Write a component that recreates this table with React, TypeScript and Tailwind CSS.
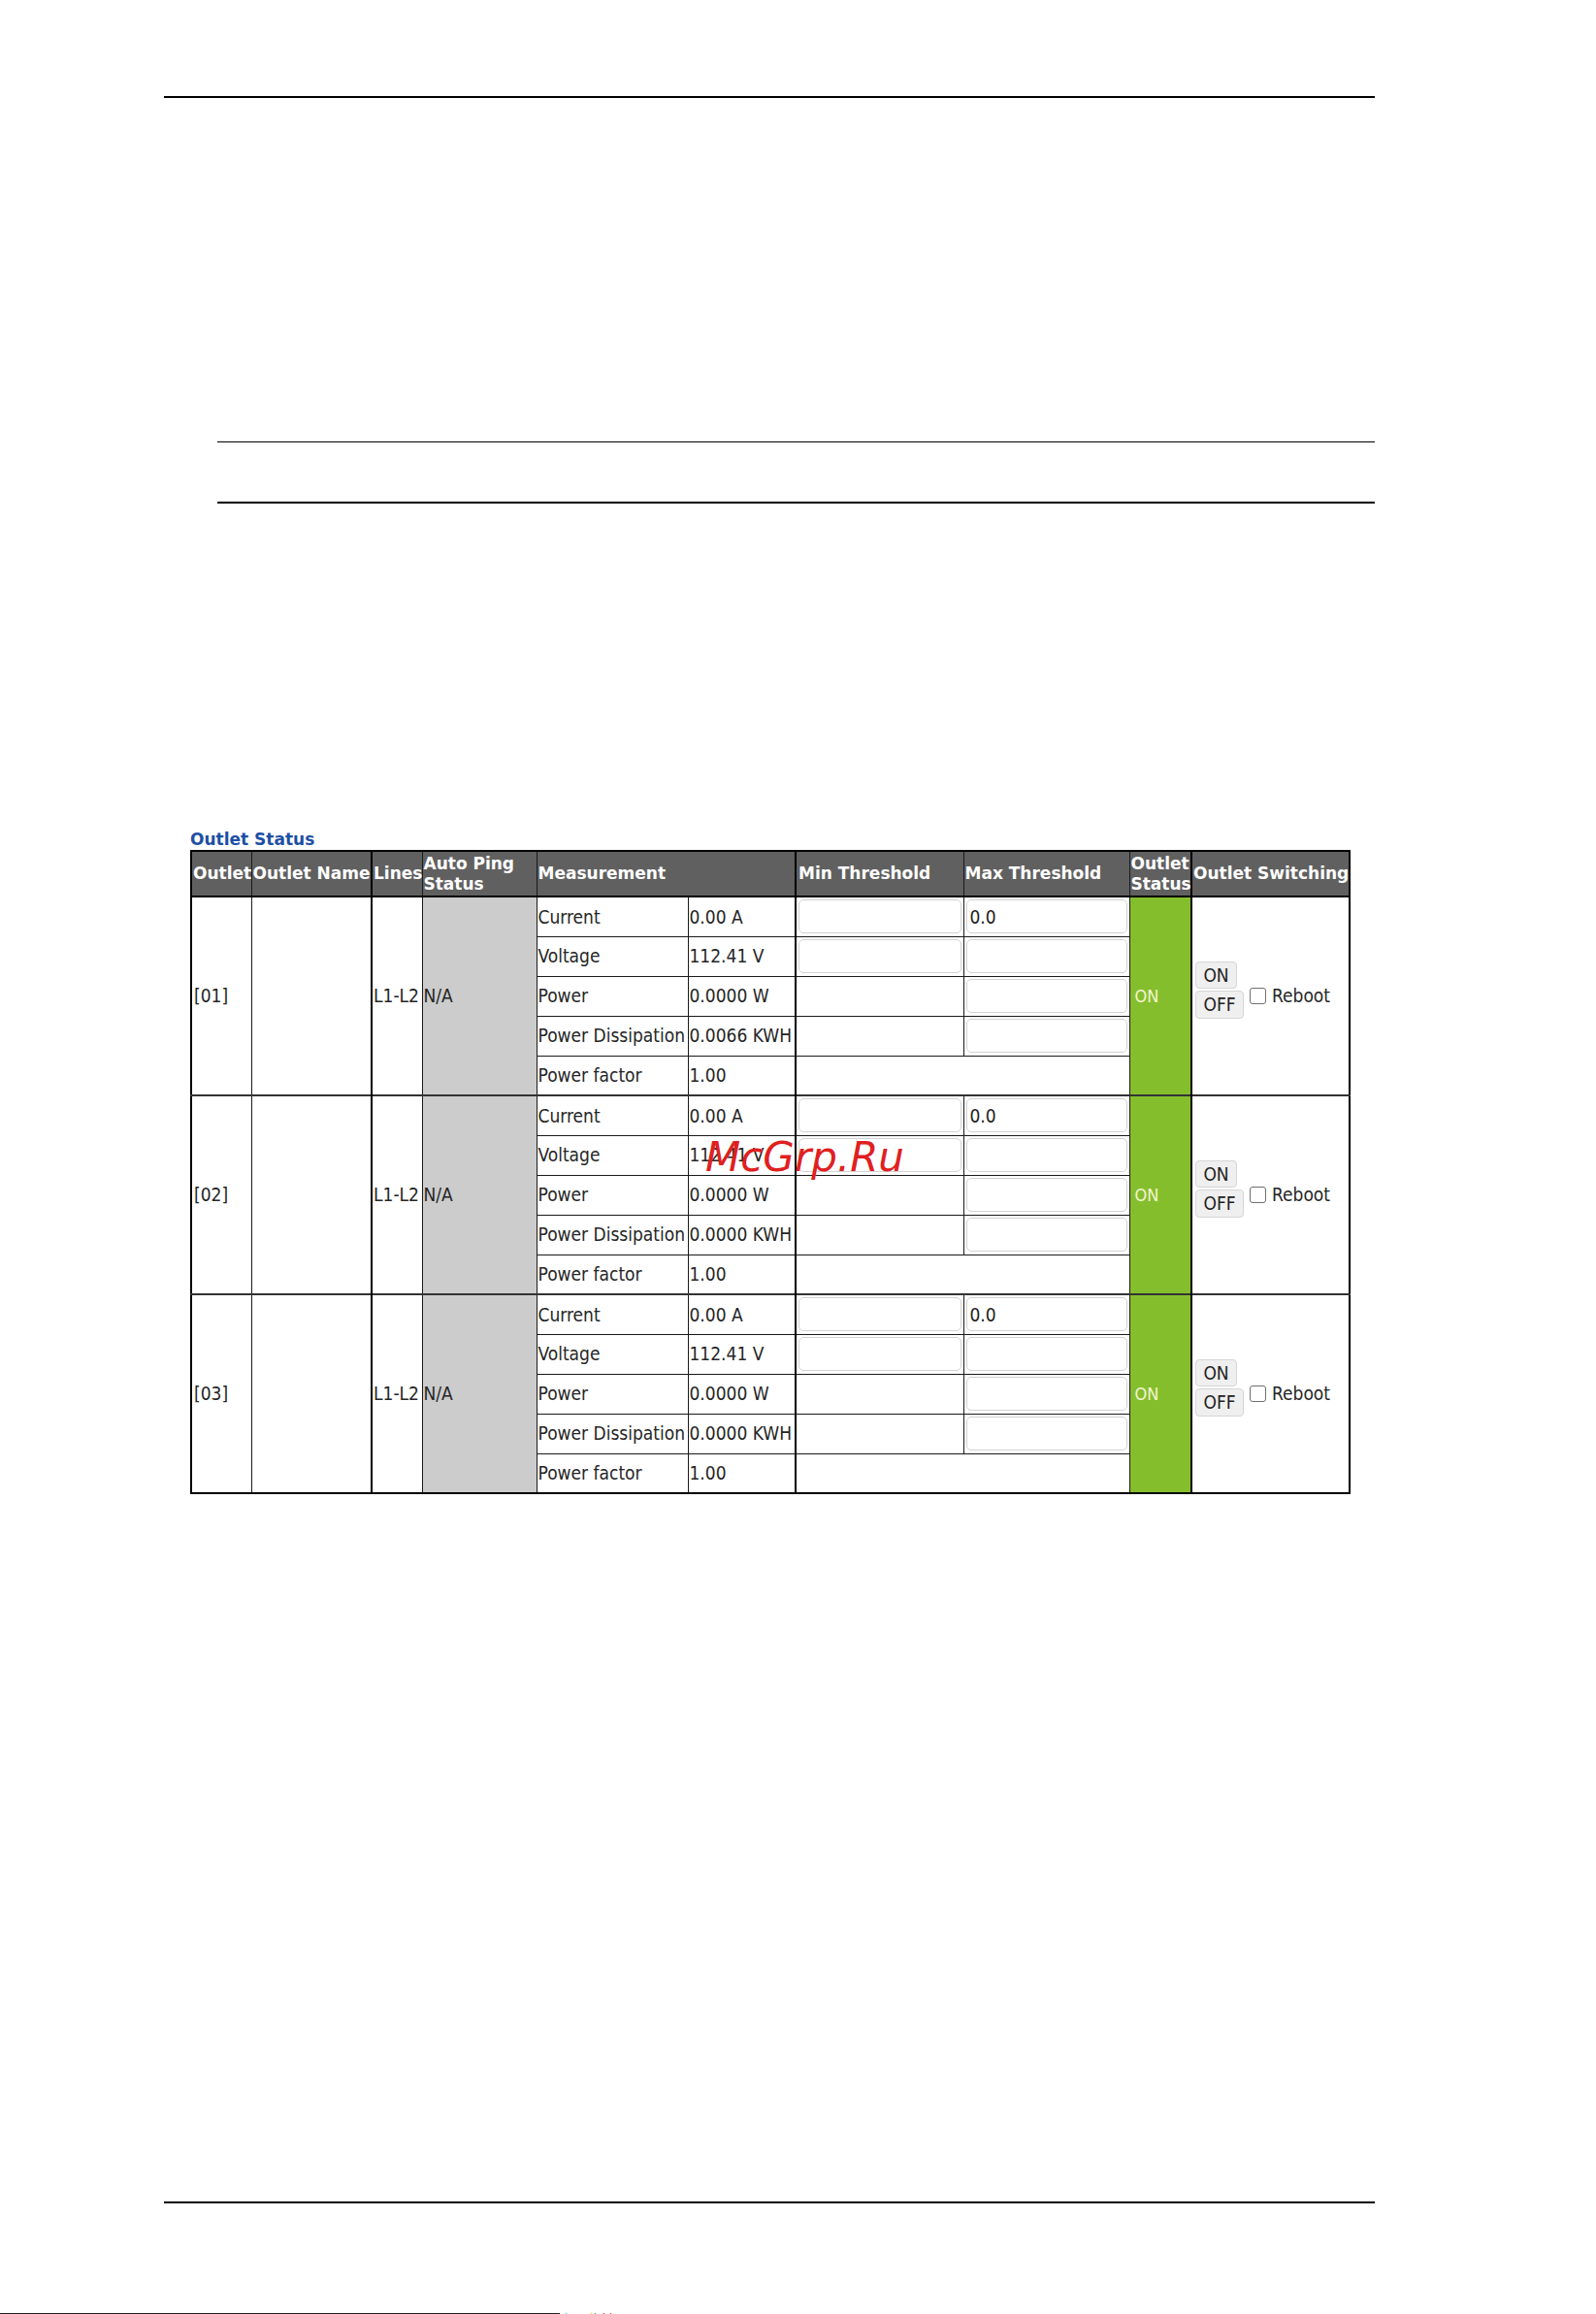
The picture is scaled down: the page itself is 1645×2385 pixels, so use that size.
import React from "react";

const labels = ["Current", "Voltage", "Power", "Power Dissipation", "Power factor"];

const groups = [
  { id: "[01]", vals: ["0.00 A", "112.41 V", "0.0000 W", "0.0066 KWH", "1.00"] },
  { id: "[02]", vals: ["0.00 A", "112.41 V", "0.0000 W", "0.0000 KWH", "1.00"] },
  { id: "[03]", vals: ["0.00 A", "112.41 V", "0.0000 W", "0.0000 KWH", "1.00"] },
];

function Field({ value }: { value?: string }) {
  return (
    <input
      readOnly
      defaultValue={value ?? ""}
      className="block w-full h-[35px] rounded-[5px] border border-[#d2d2d2] bg-white px-[3px] text-[19px] text-[#222] outline-none"
    />
  );
}

const th =
  "bg-[#606060] text-white font-['DejaVu_Sans',sans-serif] font-bold text-[17px] leading-[21px] text-left align-middle pl-[1px] border border-[#1a1a1a] border-b-2 border-b-black";
const td = "border border-[#1a1a1a] align-middle";

function Group({ g }: { g: (typeof groups)[number] }) {
  return (
    <>
      {labels.map((label, r) => {
        const first = r === 0;
        const topB = first ? " border-t-2 border-t-[#333]" : "";
        return (
          <tr key={label} className="h-[41px]">
            {first && (
              <>
                <td rowSpan={5} className={td + topB + " pl-[2px]"}>
                  {g.id}
                </td>
                <td rowSpan={5} className={td + topB + " border-r-2 border-r-black"}></td>
                <td rowSpan={5} className={td + topB + " pl-[1px]"}>
                  L1-L2
                </td>
                <td rowSpan={5} className={td + topB + " bg-[#cccccc] pl-[1px]"}>
                  N/A
                </td>
              </>
            )}
            <td className={td + topB + " pl-[1px] whitespace-nowrap"}>{label}</td>
            <td className={td + topB + " pl-[1px] whitespace-nowrap border-r-2 border-r-black"}>
              {g.vals[r]}
            </td>
            {r <= 1 && (
              <>
                <td className={td + topB + " p-[2px]"}>
                  <Field />
                </td>
                <td className={td + topB + " p-[2px]"}>
                  <Field value={first ? "0.0" : ""} />
                </td>
              </>
            )}
            {(r === 2 || r === 3) && (
              <>
                <td className={td + topB}></td>
                <td className={td + topB + " p-[2px]"}>
                  <Field />
                </td>
              </>
            )}
            {r === 4 && <td colSpan={2} className={td + topB}></td>}
            {first && (
              <>
                <td
                  rowSpan={5}
                  className={td + topB + " bg-[#85be2d] text-[#f3f3cf] text-[18px] pl-[5px] border-r-2 border-r-black"}
                >
                  ON
                </td>
                <td rowSpan={5} className={td + topB + " pl-[3px]"}>
                  <div className="flex flex-col items-start pb-[12px]">
                    <button className="h-[28px] w-[43px] rounded-[4px] border border-[#d6d6d6] bg-[#efefef] text-[19px] leading-none text-[#222]">
                      ON
                    </button>
                    <div className="flex items-start mt-[2px]">
                      <button className="h-[29px] w-[50px] rounded-[4px] border border-[#d6d6d6] bg-[#efefef] text-[19px] leading-none text-[#222]">
                        OFF
                      </button>
                      <input
                        type="checkbox"
                        readOnly
                        className="appearance-none ml-[6px] mt-[-3px] w-[17px] h-[17px] rounded-[3px] border border-[#6f6f6f] bg-white"
                      />
                      <span className="ml-[6px] mt-[-6px] leading-[22px]">Reboot</span>
                    </div>
                  </div>
                </td>
              </>
            )}
          </tr>
        );
      })}
    </>
  );
}

export default function App() {
  return (
    <div className="relative w-[1645px] h-[2385px] bg-white overflow-hidden font-['DejaVu_Sans_Condensed','DejaVu_Sans',sans-serif] text-[19px] text-[#262626]">
      <div className="pt-[99px] pl-[169px]">
        <div className="w-[1248px] h-[2px] bg-black" />
      </div>
      <div className="h-[354px]" />
      <div className="pl-[224px]">
        <div className="w-[1193px] h-px bg-black" />
      </div>
      <div className="h-[61px]" />
      <div className="pl-[224px]">
        <div className="w-[1193px] h-[2px] bg-black" />
      </div>

      <div className="h-[1750px] pt-[335px] pl-[196px]">
        <h2 className="font-['DejaVu_Sans',sans-serif] font-bold text-[17px] leading-[22px] text-[#1e4fa5]">
          Outlet Status
        </h2>
        <table className="table-fixed border-collapse border-2 border-black w-[1194px]">
          <colgroup>
            <col className="w-[62px]" />
            <col className="w-[124px]" />
            <col className="w-[52px]" />
            <col className="w-[118px]" />
            <col className="w-[156px]" />
            <col className="w-[111px]" />
            <col className="w-[173px]" />
            <col className="w-[171px]" />
            <col className="w-[64px]" />
            <col className="w-[163px]" />
          </colgroup>
          <thead>
            <tr className="h-[47px]">
              <th className={th}>Outlet</th>
              <th className={th + " border-r-2 border-r-black whitespace-nowrap"}>Outlet Name</th>
              <th className={th}>Lines</th>
              <th className={th}>
                Auto Ping
                <br />
                Status
              </th>
              <th colSpan={2} className={th + " border-r-2 border-r-black"}>
                Measurement
              </th>
              <th className={th + " pl-[2px]"}>Min Threshold</th>
              <th className={th}>Max Threshold</th>
              <th className={th + " border-r-2 border-r-black"}>
                Outlet
                <br />
                Status
              </th>
              <th className={th + " whitespace-nowrap"}>Outlet Switching</th>
            </tr>
          </thead>
          <tbody>
            {groups.map((g) => (
              <Group key={g.id} g={g} />
            ))}
          </tbody>
        </table>
      </div>

      <div className="pl-[169px]">
        <div className="w-[1248px] h-[2px] bg-black" />
      </div>
      <div className="h-[113px]" />
      <div className="flex items-center h-px">
        <div className="w-[577px] h-px bg-[#222]" />
        <div className="ml-[6px] w-px h-px bg-[#2bb6d6]" />
        <div className="ml-[25px] w-px h-px bg-[#d6c62b]" />
        <div className="ml-[3px] w-px h-px bg-[#4a9a3a]" />
        <div className="ml-[8px] w-px h-px bg-[#c03030]" />
        <div className="ml-[6px] w-px h-px bg-[#c03030]" />
      </div>

      <div className="absolute left-[727px] top-[1172px] font-['DejaVu_Sans',sans-serif] italic text-[42px] leading-[42px] text-[#e0201f] pointer-events-none">
        McGrp.Ru
      </div>
    </div>
  );
}
